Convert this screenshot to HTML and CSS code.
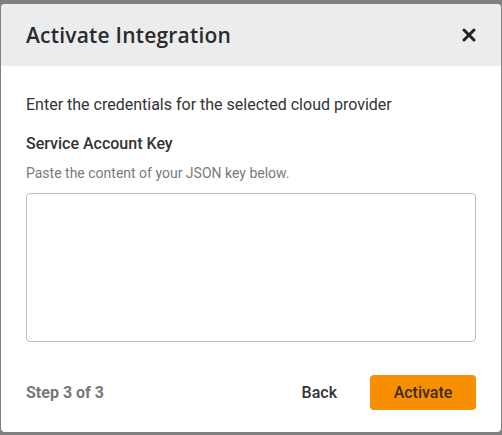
FILE: index.html
```html
<!DOCTYPE html>
<html>
<head>
<meta charset="utf-8">
<link rel="stylesheet" href="styles.css">
</head>
<body>
<div class="modal">
  <div class="modal-header">
    <h1 class="modal-title">Activate Integration</h1>
    <button class="close-btn" aria-label="Close">
      <svg width="14" height="14" viewBox="0 0 14 14"><path d="M2 2 L12 12 M12 2 L2 12" stroke="#222" stroke-width="3" stroke-linecap="round"/></svg>
    </button>
  </div>
  <div class="modal-body">
    <p class="intro">Enter the credentials for the selected cloud provider</p>
    <label class="field-label">Service Account Key</label>
    <p class="hint">Paste the content of your JSON key below.</p>
    <textarea class="key-input"></textarea>
  </div>
  <div class="modal-footer">
    <span class="step">Step 3 of 3</span>
    <div class="actions">
      <button class="btn-back">Back</button>
      <button class="btn-activate">Activate</button>
    </div>
  </div>
</div>
</body>
</html>
```

FILE: styles.css
```css
html, body {
  margin: 0;
  padding: 0;
  background: #808080;
  width: 502px;
  height: 435px;
  overflow: hidden;
}
body {
  padding: 4px 1px 0 1px;
  box-sizing: border-box;
  font-family: Roboto, "Liberation Sans", sans-serif;
}
.modal {
  width: 500px;
  height: 428px;
  background: #fff;
  border-radius: 4px;
  overflow: hidden;
  display: flex;
  flex-direction: column;
}
.modal-header {
  height: 62px;
  background: #ebecee;
  display: flex;
  align-items: center;
  justify-content: space-between;
  padding: 0 25px;
  box-sizing: border-box;
}
.modal-title {
  margin: 0;
  font-family: "Open Sans", sans-serif;
  font-size: 21px;
  font-weight: 600;
  color: #2b2b2b;
  letter-spacing: 0.2px;
}
.close-btn {
  border: 0;
  background: none;
  padding: 0;
  width: 14px;
  height: 14px;
  display: flex;
}
.modal-body {
  padding: 28px 25px 0;
  display: flex;
  flex-direction: column;
}
.intro {
  margin: 0;
  font-size: 16px;
  line-height: 22px;
  color: #333;
}
.field-label {
  margin-top: 17px;
  font-size: 16px;
  font-weight: 500;
  line-height: 22px;
  color: #333;
}
.hint {
  margin: 8px 0 0;
  font-size: 14px;
  line-height: 20px;
  color: #7a7a7a;
}
.key-input {
  margin-top: 10px;
  width: 450px;
  height: 149px;
  box-sizing: border-box;
  border: 1px solid #bdbdbd;
  border-radius: 4px;
  resize: none;
}
.modal-footer {
  display: flex;
  align-items: center;
  justify-content: space-between;
  padding: 33px 25px 0;
}
.step {
  font-size: 16px;
  font-weight: 700;
  color: #777;
}
.actions {
  display: flex;
  align-items: center;
  gap: 33px;
}
.btn-back {
  border: 0;
  background: none;
  padding: 0;
  font-family: Roboto, sans-serif;
  font-size: 16px;
  font-weight: 500;
  color: #333;
}
.btn-activate {
  width: 106px;
  height: 35px;
  border: 0;
  border-radius: 4px;
  background: #f78f00;
  font-family: Roboto, sans-serif;
  font-size: 16px;
  font-weight: 500;
  color: #3a2a10;
}
```
